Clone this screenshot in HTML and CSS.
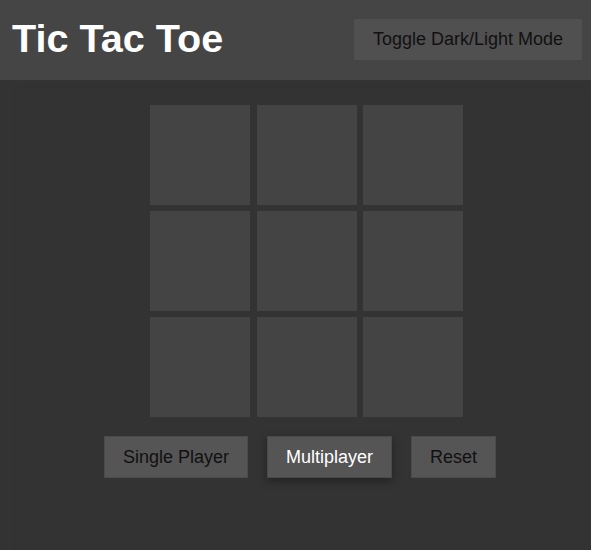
FILE: index.html
```html
<!DOCTYPE html>
<html>
<head>
<meta charset="utf-8">
<link rel="stylesheet" href="styles.css">
</head>
<body>
<header class="topbar">
  <h1 class="title">Tic Tac Toe</h1>
  <button class="toggle">Toggle Dark/Light Mode</button>
</header>
<main class="main">
  <div class="board">
    <div class="cell"></div><div class="cell"></div><div class="cell"></div>
    <div class="cell"></div><div class="cell"></div><div class="cell"></div>
    <div class="cell"></div><div class="cell"></div><div class="cell"></div>
  </div>
  <div class="controls">
    <button class="btn">Single Player</button>
    <button class="btn active">Multiplayer</button>
    <button class="btn">Reset</button>
  </div>
</main>
</body>
</html>
```
FILE: styles.css
```css
html, body {
  margin: 0;
  padding: 0;
  background: #333333;
  font-family: "Liberation Sans", Arial, sans-serif;
  height: 100%;
}
.topbar {
  height: 80px;
  background: #454545;
  display: flex;
  align-items: center;
  justify-content: space-between;
  padding: 0 9px 0 12px;
  box-sizing: border-box;
}
.title {
  margin: 0;
  color: #ffffff;
  font-size: 39.6px;
  font-weight: bold;
  line-height: 1;
  padding-bottom: 3px;
}
.toggle {
  background: #505050;
  border: none;
  color: #111111;
  font-family: inherit;
  font-size: 18px;
  height: 41px;
  padding: 0 19px;
  margin-top: -1px;
}
.main {
  margin: 8px 7.5px 0 16.5px;
  padding-top: 17px;
  height: 470px;
  box-sizing: border-box;
  display: flex;
  flex-direction: column;
  align-items: center;
  box-shadow: 0 0 5px rgba(0, 0, 0, 0.05);
}
.board {
  display: grid;
  grid-template-columns: 100px 100px 100px;
  grid-template-rows: 100px 100px 100px;
  gap: 6px 6.5px;
  margin-left: 13px;
}
.cell {
  background: #444444;
}
.controls {
  display: flex;
  gap: 19px;
  margin-top: 19px;
}
.btn {
  background: #555555;
  border: 1px solid #4a4a4a;
  color: #111111;
  font-family: inherit;
  font-size: 18px;
  height: 42px;
  padding: 0 18px;
}
.btn.active {
  color: #ffffff;
  box-shadow: 0 3px 8px rgba(0, 0, 0, 0.35);
}
```
